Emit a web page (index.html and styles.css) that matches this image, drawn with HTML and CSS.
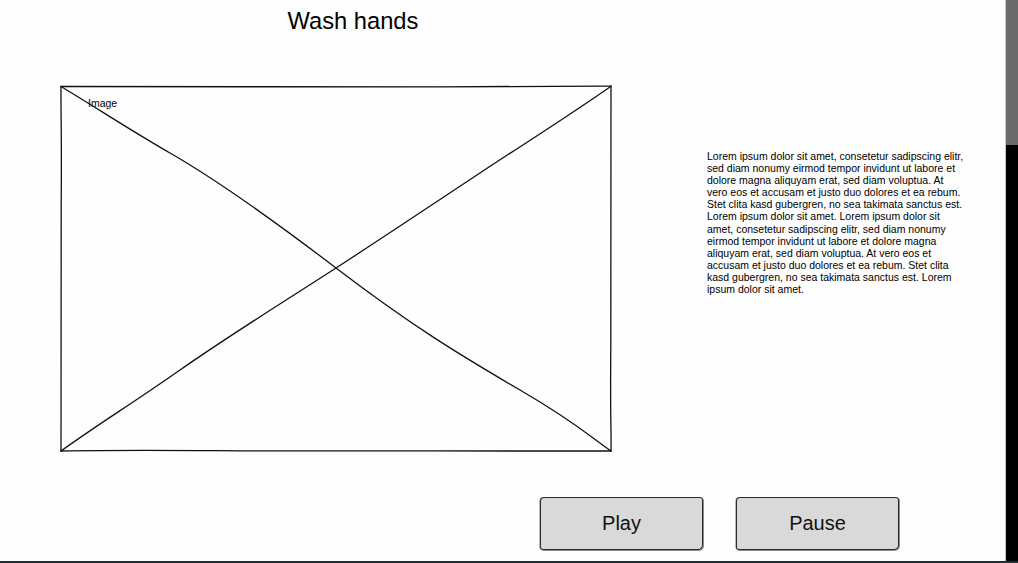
FILE: index.html
```html
<!DOCTYPE html>
<html lang="en">
<head>
<meta charset="utf-8">
<title>Wash hands</title>
<link rel="stylesheet" href="styles.css">
</head>
<body>
<div class="screen">
  <main class="canvas">
    <h1 class="title">Wash hands</h1>
    <section class="content">
      <div class="image-box">
        <svg class="sketch" width="552" height="367" viewBox="0 0 552 367" aria-hidden="true">
          <path d="M1 1.5 C120 1 260 2.5 380 1.8 S520 1 551 1.2" />
          <path d="M551 1.2 C550.5 80 551.5 170 550.8 260 S551.5 340 551 366" />
          <path d="M551 366 C430 365.5 300 366.5 180 365.8 S60 365 1 366" />
          <path d="M1 366 C1.5 280 0.6 200 1.2 120 S0.8 40 1 1.5" />
          <path d="M1 1.5 C40 25 70 45 110 68 S200 125 276 183 S400 270 460 305 S530 352 551 366" />
          <path d="M551 1.2 C510 30 470 55 420 88 S330 148 276 183 S170 250 120 285 S40 338 1 366" />
        </svg>
        <span class="image-label">Image</span>
      </div>
      <p class="lorem">Lorem ipsum dolor sit amet, consetetur sadipscing elitr, sed diam nonumy eirmod tempor invidunt ut labore et dolore magna aliquyam erat, sed diam voluptua. At vero eos et accusam et justo duo dolores et ea rebum. Stet clita kasd gubergren, no sea takimata sanctus est. Lorem ipsum dolor sit amet. Lorem ipsum dolor sit amet, consetetur sadipscing elitr, sed diam nonumy eirmod tempor invidunt ut labore et dolore magna aliquyam erat, sed diam voluptua. At vero eos et accusam et justo duo dolores et ea rebum. Stet clita kasd gubergren, no sea takimata sanctus est. Lorem ipsum dolor sit amet.</p>
    </section>
    <div class="controls">
      <button class="btn" type="button">Play</button>
      <button class="btn" type="button">Pause</button>
    </div>
  </main>
  <aside class="scrollbar">
    <div class="thumb"></div>
    <div class="track"></div>
  </aside>
</div>
<div class="bottom-bar"></div>
</body>
</html>
```
FILE: styles.css
```css
html, body {
  margin: 0;
  padding: 0;
  background: #ffffff;
}

body {
  width: 1018px;
  height: 563px;
  overflow: hidden;
  font-family: "Liberation Sans", Arial, sans-serif;
  color: #000;
}

.screen {
  display: flex;
  width: 1018px;
  height: 561px;
}

.canvas {
  width: 1005px;
  flex: none;
  display: flex;
  flex-direction: column;
  background: #fefefe;
}

.title {
  width: 706px;
  margin: 0;
  padding-top: 7px;
  text-align: center;
  font-weight: normal;
  font-size: 23.7px;
  line-height: 28px;
}

.content {
  display: flex;
  align-items: flex-start;
  margin-top: 50px;
  padding-left: 60px;
}

.image-box {
  position: relative;
  width: 552px;
  height: 367px;
  flex: none;
}

.sketch {
  display: block;
}

.sketch path {
  fill: none;
  stroke: #111;
  stroke-width: 1.3;
  stroke-linecap: round;
}

.image-label {
  position: absolute;
  left: 28px;
  top: 12px;
  font-size: 10.5px;
  line-height: 12px;
}

.lorem {
  width: 258px;
  flex: none;
  margin: 65px 0 0 95px;
  font-size: 10.5px;
  line-height: 12.1px;
}

.controls {
  display: flex;
  gap: 33px;
  margin-top: 45px;
  padding-left: 540px;
}

.btn {
  width: 163px;
  height: 53px;
  padding: 0;
  background: #d9d9d9;
  border: 1.5px solid #2a2a2a;
  border-radius: 4px 3px 5px 3px;
  box-shadow: 1px 1px 0 #8a8a8a, -0.5px 0 0 #777;
  font-family: "Liberation Sans", Arial, sans-serif;
  font-size: 20px;
  color: #111;
}

.scrollbar {
  width: 13px;
  height: 561px;
  flex: none;
  display: block;
  border-left: 1px solid #c4c4c4;
  box-sizing: border-box;
  background: #000;
}

.thumb {
  width: 12px;
  height: 145px;
  background: #6b6b6b;
}

.track {
  width: 12px;
  height: 416px;
  background: #000;
}

.bottom-bar {
  height: 2px;
  background: #1f303a;
}
```
